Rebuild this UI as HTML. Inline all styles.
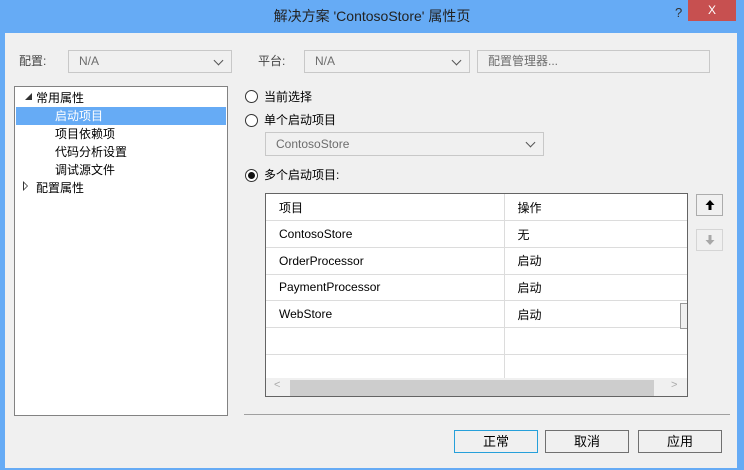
<!DOCTYPE html>
<html><head><meta charset="utf-8"><style>
*{margin:0;padding:0;box-sizing:border-box}
body{width:744px;height:470px;background:#66abf5;font-family:"Segoe UI","Liberation Sans","Noto Sans CJK SC",sans-serif;font-size:12px;color:#000;position:relative;overflow:hidden}
.a{position:absolute}
.client{left:5px;top:33px;width:732px;height:435px;background:#f0f0f0}
.combo{background:#f0f0f0;border:1px solid #c8c8c8;color:#6d6d6d;padding-left:10px;line-height:20px}
.chev{position:absolute;right:9px;top:6px;width:7px;height:7px;border-right:1px solid #555;border-bottom:1px solid #555;transform:rotate(45deg)}
.radio{width:13px;height:13px;border:1px solid #333;border-radius:50%;background:#fff}
.btn{border:1px solid #707070;background:#f0f0f0;text-align:center;line-height:21px;font-size:13px}
td{height:26.7px;border-bottom:1px solid #dcdcdc;padding-left:13px;font-size:12px}
</style></head><body>
<div class="a client"></div>
<div class="a" style="left:0;top:0;width:744px;height:33px;background:#66abf5;text-align:center;line-height:33px;font-size:14px;color:#222">解决方案 'ContosoStore' 属性页</div>
<div class="a" style="left:675px;top:5px;color:#333;font-size:13px">?</div>
<div class="a" style="left:688px;top:0;width:48px;height:21px;background:#c75050;color:#fff;text-align:center;line-height:21px;font-size:12px">X</div>

<div class="a" style="left:19px;top:52px;color:#444">配置:</div>
<div class="a combo" style="left:68px;top:50px;width:164px;height:23px">N/A<span class="chev"></span></div>
<div class="a" style="left:258px;top:52px;color:#444">平台:</div>
<div class="a combo" style="left:304px;top:50px;width:166px;height:23px">N/A<span class="chev"></span></div>
<div class="a combo" style="left:477px;top:50px;width:233px;height:23px">配置管理器...</div>

<div class="a" style="left:14px;top:86px;width:214px;height:330px;background:#fff;border:1px solid #828282"></div>
<div class="a" style="left:25px;top:92px;font-size:7px;color:#333">◢</div>
<div class="a" style="left:36px;top:89px">常用属性</div>
<div class="a" style="left:16px;top:107px;width:210px;height:18px;background:#66abf5"></div>
<div class="a" style="left:55px;top:107px;color:#fff">启动项目</div>
<div class="a" style="left:55px;top:125px">项目依赖项</div>
<div class="a" style="left:55px;top:143px">代码分析设置</div>
<div class="a" style="left:55px;top:161px">调试源文件</div>
<div class="a" style="left:23px;top:181px;width:0;height:0;border-left:5px solid #333;border-top:5px solid transparent;border-bottom:5px solid transparent"></div>
<div class="a" style="left:24px;top:182.5px;width:0;height:0;border-left:3px solid #fff;border-top:3.5px solid transparent;border-bottom:3.5px solid transparent"></div>
<div class="a" style="left:36px;top:179px">配置属性</div>

<div class="a radio" style="left:245px;top:90px"></div>
<div class="a" style="left:264px;top:88px">当前选择</div>
<div class="a radio" style="left:245px;top:114px"></div>
<div class="a" style="left:264px;top:111px">单个启动项目</div>
<div class="a combo" style="left:265px;top:132px;width:279px;height:24px;line-height:22px">ContosoStore<span class="chev"></span></div>
<div class="a radio" style="left:245px;top:169px"></div>
<div class="a" style="left:248px;top:172px;width:7px;height:7px;border-radius:50%;background:#111"></div>
<div class="a" style="left:264px;top:166px">多个启动项目:</div>

<div class="a" style="left:265px;top:193px;width:423px;height:204px;background:#fff;border:1px solid #646464;overflow:hidden">
<table style="border-collapse:collapse;width:421px">
<tr><td style="width:238px;border-right:1px solid #dcdcdc">项目</td><td>操作</td></tr>
<tr><td style="border-right:1px solid #dcdcdc">ContosoStore</td><td>无</td></tr>
<tr><td style="border-right:1px solid #dcdcdc">OrderProcessor</td><td>启动</td></tr>
<tr><td style="border-right:1px solid #dcdcdc">PaymentProcessor</td><td>启动</td></tr>
<tr><td style="border-right:1px solid #dcdcdc">WebStore</td><td>启动</td></tr>
<tr><td style="border-right:1px solid #dcdcdc"></td><td></td></tr>
<tr><td style="border-right:1px solid #dcdcdc"></td><td></td></tr>
</table>
<div class="a" style="left:414px;top:109px;width:8px;height:26px;background:#f0f0f0;border:1px solid #999;border-right:none"></div>
<div class="a" style="left:0;top:184px;width:422px;height:19px;background:#f0f0f0"></div>
<div class="a" style="left:24px;top:186px;width:364px;height:16px;background:#cdcdcd"></div>
<div class="a" style="left:8px;top:185px;color:#aaa;font-size:11px">&lt;</div>
<div class="a" style="left:405px;top:185px;color:#aaa;font-size:11px">&gt;</div>
</div>

<div class="a" style="left:696px;top:194px;width:27px;height:22px;border:1px solid #acacac;background:#f0f0f0">
<svg class="a" style="left:8px;top:5px" width="10" height="10"><path d="M5 0 L9.5 5 L6.5 5 L6.5 10 L3.5 10 L3.5 5 L0.5 5 Z" fill="#000"/></svg></div>
<div class="a" style="left:696px;top:229px;width:27px;height:22px;border:1px solid #d5d5d5;background:#f0f0f0">
<svg class="a" style="left:8px;top:5px" width="10" height="10"><path d="M5 10 L9.5 5 L6.5 5 L6.5 0 L3.5 0 L3.5 5 L0.5 5 Z" fill="#a8a8a8"/></svg></div>

<div class="a" style="left:244px;top:414px;width:486px;height:1px;background:#a0a0a0"></div>
<div class="a btn" style="left:454px;top:430px;width:84px;height:23px;border-color:#26a0da">正常</div>
<div class="a btn" style="left:545px;top:430px;width:84px;height:23px">取消</div>
<div class="a btn" style="left:638px;top:430px;width:84px;height:23px">应用</div>
</body></html>
